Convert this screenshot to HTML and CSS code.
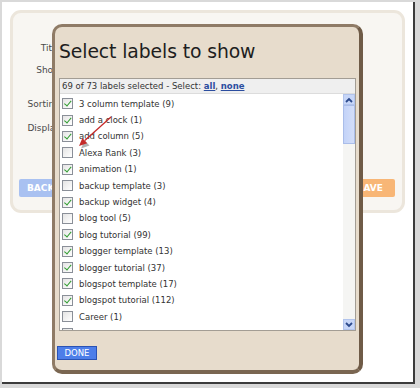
FILE: index.html
```html
<!DOCTYPE html>
<html>
<head>
<meta charset="utf-8">
<link rel="stylesheet" href="styles.css">
</head>
<body>
<div class="frame">
  <div class="panel">
    <div class="fields">
      <div class="field f1">Title:</div>
      <div class="field f2">Show:</div>
      <div class="field f3">Sorting:</div>
      <div class="field f4">Display:</div>
    </div>
    <div class="actions">
      <span class="btn back">BACK</span>
      <span class="btn save">SAVE</span>
    </div>
  </div>

  <div class="modal">
    <h1 class="title">Select labels to show</h1>
    <div class="listbox">
      <div class="lhead">69 of 73 labels selected - Select: <a class="lnk">all</a>, <a class="lnk">none</a></div>
      <div class="lbody">
        <ul class="labels">
          <li class="row"><span class="cb on"></span>3 column template (9)</li>
          <li class="row"><span class="cb on"></span>add a clock (1)</li>
          <li class="row"><span class="cb on"></span>add column (5)</li>
          <li class="row"><span class="cb"></span>Alexa Rank (3)</li>
          <li class="row"><span class="cb on"></span>animation (1)</li>
          <li class="row"><span class="cb"></span>backup template (3)</li>
          <li class="row"><span class="cb on"></span>backup widget (4)</li>
          <li class="row"><span class="cb"></span>blog tool (5)</li>
          <li class="row"><span class="cb on"></span>blog tutorial (99)</li>
          <li class="row"><span class="cb on"></span>blogger template (13)</li>
          <li class="row"><span class="cb on"></span>blogger tutorial (37)</li>
          <li class="row"><span class="cb on"></span>blogspot template (17)</li>
          <li class="row"><span class="cb on"></span>blogspot tutorial (112)</li>
          <li class="row"><span class="cb"></span>Career (1)</li>
          <li class="row"><span class="cb on"></span></li>
        </ul>
        <div class="scrollbar">
          <span class="sb-btn"><svg width="8" height="6" viewBox="0 0 8 6"><path d="M1 5 L4 2 L7 5" fill="none" stroke="#2c4a8c" stroke-width="1.8"/></svg></span>
          <span class="sb-thumb"></span>
          <span class="sb-track"></span>
          <span class="sb-btn"><svg width="8" height="6" viewBox="0 0 8 6"><path d="M1 1 L4 4 L7 1" fill="none" stroke="#2c4a8c" stroke-width="1.8"/></svg></span>
        </div>
      </div>
    </div>
    <div class="foot"><span class="done">DONE</span></div>
  </div>

  <svg class="arrow" width="45" height="40" viewBox="0 0 45 40">
    <polygon points="15.5,33.5 10.5,28.5 7,36.5" fill="#555" opacity="0.45"/>
    <line x1="37" y1="5" x2="10.8" y2="28.6" stroke="#c52a2a" stroke-width="1.3"/>
    <polygon points="5,34 13.2,31.2 8.4,26" fill="#c52a2a"/>
  </svg>
</div>
</body>
</html>
```

FILE: styles.css
```css
html, body {
  margin: 0;
  padding: 0;
}
body {
  background: #d9d9d9;
  width: 420px;
  height: 388px;
  overflow: hidden;
  font-family: "DejaVu Sans", Verdana, sans-serif;
}
.frame {
  position: relative;
  margin: 2px 0 0 2px;
  width: 411px;
  height: 379px;
  background: #ffffff;
  border-right: 2px solid #3c3c3c;
  border-bottom: 2px solid #3c3c3c;
  box-sizing: content-box;
  padding-top: 1px;
  overflow: hidden;
}
.panel {
  margin: 7px 0 0 8px;
  width: 395px;
  height: 203px;
  box-sizing: border-box;
  border: 3px solid #ece6dc;
  border-radius: 11px;
  background: #f8f6f2;
  padding-top: 28px;
  display: flex;
  flex-direction: column;
}
.fields {
  display: flex;
  flex-direction: column;
  width: 50px;
}
.field {
  font-size: 9px;
  color: #4a4a4a;
  text-align: right;
  line-height: 14px;
}
.f1 { height: 22px; }
.f2 { height: 34px; }
.f3 { height: 24px; }
.f4 { height: 14px; }
.actions {
  margin-top: 44px;
  padding: 0 7px 0 6px;
  display: flex;
  justify-content: space-between;
}
.btn {
  width: 46px;
  height: 18px;
  line-height: 18px;
  font-size: 9px;
  font-weight: bold;
  color: #ffffff;
  text-align: left;
  padding-left: 8px;
  box-sizing: border-box;
  border-radius: 2px;
}
.back {
  background: #a9c1f1;
}
.save {
  background: #f8b676;
}

.modal {
  position: absolute;
  left: 50px;
  top: 22px;
  width: 311px;
  height: 350px;
  box-sizing: border-box;
  border: 3px solid #8f7b66;
  border-right: 4px solid #6f5b47;
  border-bottom: 4px solid #7a6651;
  border-radius: 10px;
  background: #e7dccc;
  padding: 0 3px 0 4px;
  display: flex;
  flex-direction: column;
}
.title {
  margin: 0 0 14px 0;
  padding-top: 13px;
  font-family: "DejaVu Sans", Verdana, sans-serif;
  font-weight: normal;
  font-size: 18.8px;
  line-height: 24px;
  color: #1e1e1e;
  letter-spacing: -0.1px;
}
.listbox {
  width: 297px;
  height: 253px;
  box-sizing: border-box;
  border: 1px solid #a39d94;
  background: #ffffff;
  display: flex;
  flex-direction: column;
}
.lhead {
  height: 15px;
  line-height: 15px;
  background: #efefef;
  border-bottom: 1px solid #dcdcdc;
  box-sizing: border-box;
  font-size: 8.5px;
  color: #333333;
  padding-left: 2px;
  white-space: nowrap;
}
.lnk {
  color: #2b4d9f;
  font-weight: bold;
  text-decoration: underline;
}
.lbody {
  flex: 1;
  display: flex;
  overflow: hidden;
}
.labels {
  flex: 1;
  list-style: none;
  margin: 0;
  padding: 1.5px 0 0 0;
}
.row {
  height: 16.4px;
  display: flex;
  align-items: center;
  padding-left: 2px;
  font-size: 8.5px;
  color: #333333;
  white-space: nowrap;
}
.cb {
  position: relative;
  width: 11px;
  height: 11px;
  box-sizing: border-box;
  border: 1px solid #8a8f98;
  background: linear-gradient(135deg, #e4e4e4, #ffffff);
  margin-right: 6px;
  flex: none;
}
.cb.on::after {
  content: "";
  position: absolute;
  left: 3px;
  top: 0px;
  width: 2.5px;
  height: 5.5px;
  border: solid #2f9c2f;
  border-width: 0 1.8px 1.8px 0;
  transform: rotate(40deg);
}
.scrollbar {
  width: 12px;
  display: flex;
  flex-direction: column;
  background: #f5f5f3;
}
.sb-btn {
  height: 11px;
  background: #c7d6f8;
  border: 1px solid #b2c4ec;
  box-sizing: border-box;
  display: flex;
  align-items: center;
  justify-content: center;
}
.sb-thumb {
  height: 39px;
  background: linear-gradient(90deg, #c3d3f8, #d3def9);
  border: 1px solid #aabde9;
  box-sizing: border-box;
}
.sb-track {
  flex: 1;
}
.foot {
  padding: 10px 0 0 0;
  margin-left: -2px;
}
.done {
  display: inline-block;
  width: 40px;
  height: 14px;
  line-height: 12px;
  box-sizing: border-box;
  background: #4d7ee9;
  border: 1px solid #2a52b4;
  color: #ffffff;
  font-size: 8.5px;
  text-align: center;
}
.arrow {
  position: absolute;
  left: 72px;
  top: 110px;
}
```
